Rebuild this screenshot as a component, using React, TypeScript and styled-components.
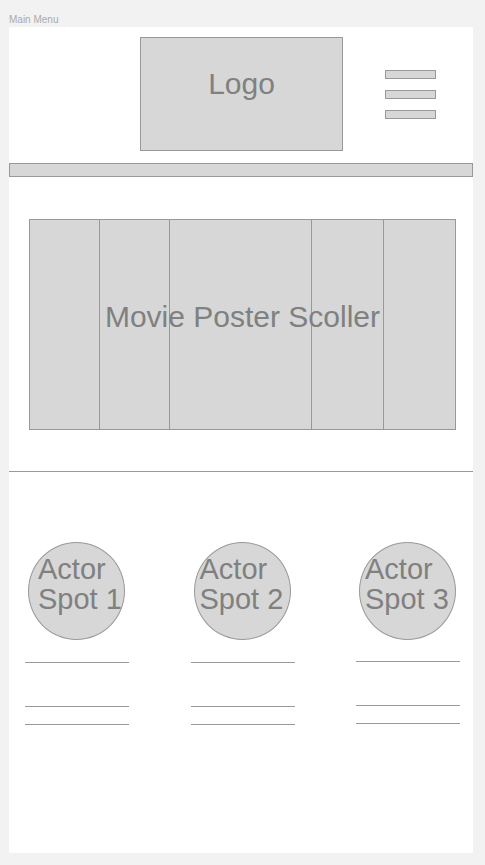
import React from "react";
import styled, { createGlobalStyle } from "styled-components";

const GlobalStyle = createGlobalStyle`
  html, body {
    margin: 0;
    padding: 0;
    background: #f2f2f2;
    font-family: "Liberation Sans", Arial, sans-serif;
  }
`;

const Page = styled.div`
  padding: 12px 0 0 9px;
  box-sizing: border-box;
  width: 485px;
  height: 865px;
`;

const FrameLabel = styled.div`
  font-size: 10px;
  line-height: 15px;
  color: #ababab;
`;

const Board = styled.div`
  width: 464px;
  height: 826px;
  background: #fff;
  display: flex;
  flex-direction: column;
`;

const Header = styled.header`
  display: flex;
  align-items: flex-start;
  height: 136px;
  padding: 10px 0 0 131px;
  box-sizing: border-box;
`;

const Placeholder = styled.div`
  background: #d7d7d7;
  border: 1px solid #999;
  box-sizing: border-box;
`;

const LogoBox = styled(Placeholder)`
  width: 203px;
  height: 114px;
  display: flex;
  align-items: center;
  justify-content: center;
  padding-bottom: 20px;
  font-size: 30px;
  line-height: 30px;
  color: #808080;
`;

const Hamburger = styled.div`
  display: flex;
  flex-direction: column;
  gap: 11px;
  margin: 33px 0 0 42px;
`;

const Bar = styled(Placeholder)`
  width: 51px;
  height: 9px;
`;

const NavBar = styled(Placeholder)`
  width: 464px;
  height: 14px;
`;

const Scroller = styled.div`
  display: grid;
  grid-template-columns: 70px 70px 142px 72px 1fr;
  height: 211px;
  width: 427px;
  margin: 42px 0 0 20px;
  border: 1px solid #999;
  box-sizing: border-box;
  background: #d7d7d7;
`;

const Poster = styled.div<{ $col: number; $last?: boolean }>`
  grid-row: 1;
  grid-column: ${(p) => p.$col};
  border-right: ${(p) => (p.$last ? "none" : "1px solid #999")};
`;

const ScrollerLabel = styled.div`
  grid-row: 1;
  grid-column: 1 / -1;
  align-self: center;
  justify-self: center;
  margin-bottom: 16px;
  font-size: 30px;
  line-height: 30px;
  color: #808080;
  white-space: nowrap;
`;

const Divider = styled.hr`
  margin: 41px 0 0;
  border: none;
  border-top: 1px solid #999;
  width: 464px;
`;

const ActorRow = styled.div`
  display: grid;
  grid-template-columns: repeat(3, 104px);
  column-gap: 61.5px;
  padding: 70px 0 0 16px;
`;

const ActorCol = styled.div<{ $lift: number }>`
  display: flex;
  flex-direction: column;
  align-items: center;
  --lift: ${(p) => p.$lift}px;
`;

const Avatar = styled.div<{ $inset: number }>`
  width: 97px;
  height: 98px;
  margin-left: -1px;
  border-radius: 50%;
  border: 1px solid #999;
  background: #d7d7d7;
  box-sizing: border-box;
  padding: 11px 0 0 ${(p) => p.$inset}px;
  font-size: 29px;
  line-height: 30px;
  color: #808080;
  white-space: nowrap;
`;

const TextLine = styled.div<{ $gap: number }>`
  width: 104px;
  height: 0;
  border-top: 1px solid #999;
  margin-top: ${(p) => p.$gap}px;
`;

const posters = [0, 1, 2, 3, 4];
const actors = [
  { n: 1, inset: 9, lift: 0 },
  { n: 2, inset: 5, lift: 0 },
  { n: 3, inset: 5, lift: 1 },
];

export default function App() {
  return (
    <>
      <GlobalStyle />
      <Page>
        <FrameLabel>Main Menu</FrameLabel>
        <Board>
          <Header>
            <LogoBox>Logo</LogoBox>
            <Hamburger>
              <Bar />
              <Bar />
              <Bar />
            </Hamburger>
          </Header>
          <NavBar />
          <Scroller>
            {posters.map((i) => (
              <Poster key={i} $col={i + 1} $last={i === posters.length - 1} />
            ))}
            <ScrollerLabel>Movie Poster Scoller</ScrollerLabel>
          </Scroller>
          <Divider />
          <ActorRow>
            {actors.map((a) => (
              <ActorCol key={a.n} $lift={a.lift}>
                <Avatar $inset={a.inset}>
                  Actor
                  <br />
                  Spot {a.n}
                </Avatar>
                <TextLine $gap={22 - a.lift} />
                <TextLine $gap={43} />
                <TextLine $gap={17} />
              </ActorCol>
            ))}
          </ActorRow>
        </Board>
      </Page>
    </>
  );
}
